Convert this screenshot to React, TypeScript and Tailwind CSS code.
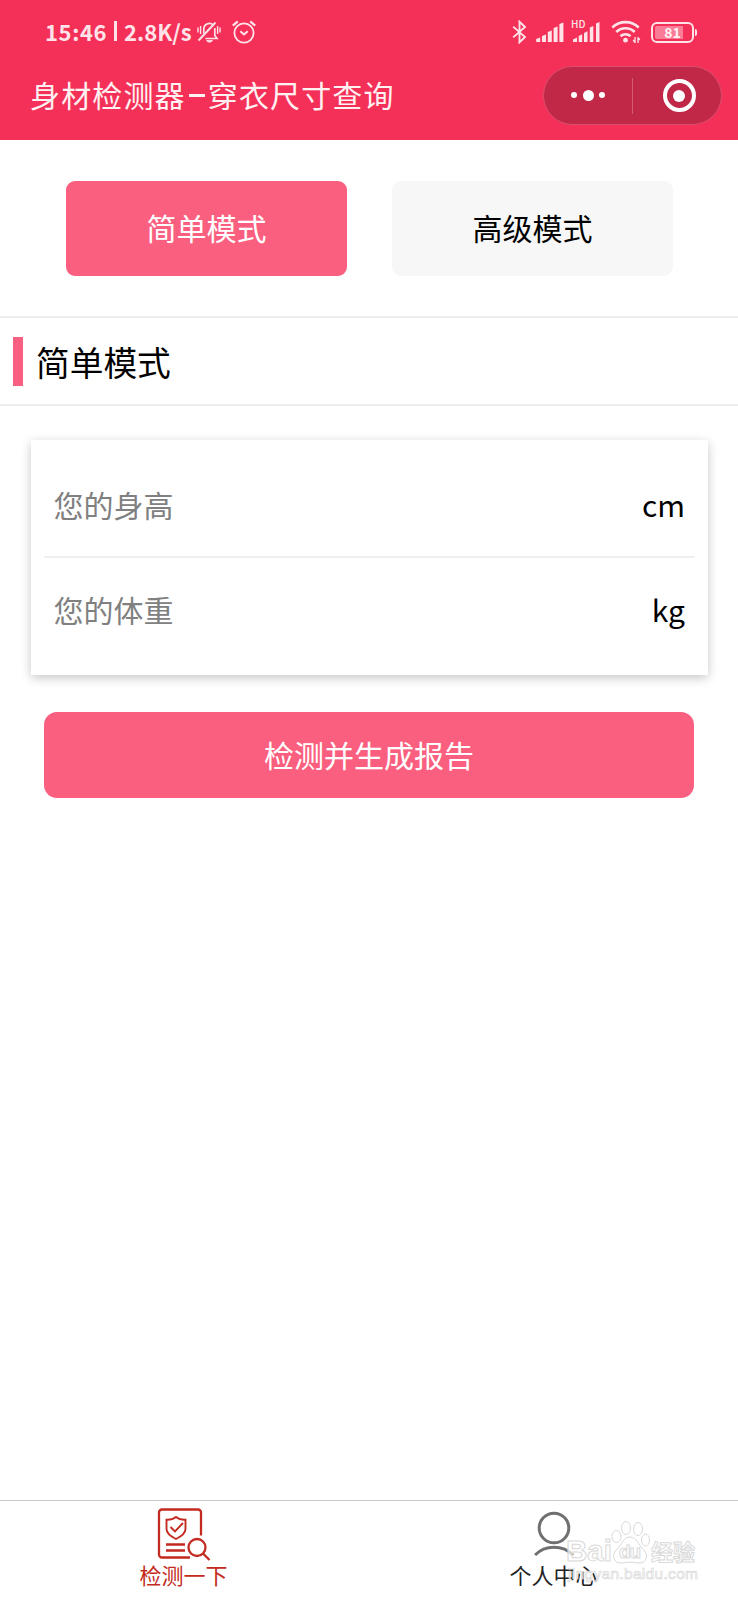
import { useState } from 'react';

const SIGNAL_BARS = [4, 7, 11, 15, 19];

function MutedBell() {
  return (
    <svg className="w-6 h-6" fill="none" viewBox="0 0 24 24" stroke="currentColor" strokeWidth={1.7}>
      <path d="M6.8 13.500V9a5.600 5.600 0 0 1 9.500-4M17.800 8v7.500l2.200 3H8.500" />
      <path d="M1.500 20.500L18.500 2.500" strokeWidth={2} />
      <path d="M1 7.500v5M3.600 6v8M23 7.500v5M20.600 6v8" strokeWidth={1.400} />
      <path d="M9.500 20.500h6c-1 2.200-5 2.200-6 0z" fill="currentColor" strokeWidth={0.800} />
    </svg>
  );
}

function AlarmClock() {
  return (
    <svg className="w-6 h-6" fill="none" viewBox="0 0 24 24" stroke="currentColor" strokeWidth={1.800}>
      <circle cx="12" cy="13" r="9.600" />
      <path d="M8.300 11.200l3.700 3.200 3.700-3.200" strokeWidth={2} />
      <path d="M.800 5.600L5.800 1.300M23.200 5.600L18.200 1.300" strokeWidth={2.200} />
    </svg>
  );
}

function Bluetooth() {
  return (
    <svg className="w-[15px] h-6" fill="none" viewBox="0 0 15 24" stroke="currentColor" strokeWidth={1.900}>
      <path d="M1.200 6.600L13 17l-5.500 5.300V1.700L13 7 1.200 17.400" />
    </svg>
  );
}

function Signal({ hd }: { hd?: boolean }) {
  return (
    <svg className="w-7 h-6" viewBox="0 0 28 24" fill="currentColor">
      {hd ? (
        <path d="M1 22v-2.500l4-2V22zM6.700 22v-6l3.500-1.700V22zM12 22v-9l3.500-1.700V22zM17.800 22V7.500L21.300 6v16zM24 22V3.500L27.500 2v20z" />
      ) : (
        SIGNAL_BARS.map((h, i) => (
          <path key={h} d={`M${i * 5.800 + 0.200} 22v-${h - 1}l4-1.500V22z`} />
        ))
      )}
    </svg>
  );
}

function Wifi() {
  return (
    <svg className="w-[30px] h-6" fill="none" viewBox="0 0 30 24" stroke="currentColor" strokeWidth={2.600}>
      <path d="M1.300 7.500a19 19 0 0 1 26.400 0M5.300 12a13 13 0 0 1 18.400 0M9.500 16.300a7.200 7.200 0 0 1 10 0" />
      <circle cx="14.500" cy="20.200" r="2.400" fill="currentColor" stroke="none" />
      <path d="M24 17v6M27 17v6M22.200 20l1.800 2.500M28.800 20L27 17.500" strokeWidth={1.300} />
    </svg>
  );
}

function StatusBar() {
  return (
    <div className="h-[58px] pt-[6px] flex items-center text-[#ffe3e9]">
      <div className="-mt-[2px] ml-[45px] w-[148px] flex items-center whitespace-nowrap text-[22px] leading-none font-semibold">
        <span className="tracking-[0.6px]">15:46</span>
        <span className="ml-[7px] mr-[7px] w-[3px] h-5 bg-[#ffe3e9]" />
        <span>2.8K/s</span>
      </div>
      <div className="ml-[4px]"><MutedBell /></div>
      <div className="ml-[10.500px]"><AlarmClock /></div>
      <div className="ml-auto mr-[41px] flex items-center">
        <Bluetooth />
        <div className="ml-[9px]"><Signal /></div>
        <div className="ml-[8px] relative">
          <Signal hd />
          <span className="absolute left-[-1px] top-[-1px] text-[10px] leading-none font-medium bg-[#f43058]">HD</span>
        </div>
        <div className="ml-[11px]"><Wifi /></div>
        <div className="ml-[10px] w-[43px] h-[21px] rounded-[6px] border-2 border-[#ffe3e9] p-[2px]">
          <div className="h-full w-full flex items-center justify-center text-[14px] leading-none font-bold text-[#fff3f5] bg-linear-to-r from-[#fa7c97] from-81% to-transparent to-81% rounded-[2px]">
            81
          </div>
        </div>
        <div className="w-[2px] h-[7px] ml-[1px] rounded-r bg-[#ffe3e9]" />
      </div>
    </div>
  );
}

function Capsule() {
  return (
    <div className="w-[179px] h-[59px] -mt-[1px] rounded-full bg-[#c12847] border border-[#d94f6d] flex items-center text-white">
      <div className="w-[88px] -mt-[1px] flex items-center justify-center gap-[5.500px]">
        <span className="w-[6px] h-[6px] rounded-full bg-white" />
        <span className="w-[11px] h-[11px] rounded-full bg-white" />
        <span className="w-[6px] h-[6px] rounded-full bg-white" />
      </div>
      <div className="w-px h-9 bg-[#d55a74]" />
      <div className="flex-1 pl-[4px] flex justify-center">
        <div className="w-[33px] h-[33px] rounded-full border-[4.5px] border-white flex items-center justify-center">
          <span className="w-3 h-3 rounded-full bg-white" />
        </div>
      </div>
    </div>
  );
}

function ReportIcon() {
  return (
    <svg className="w-[54px] h-[54px]" fill="none" viewBox="0 0 54 54" stroke="currentColor" strokeWidth={2.300}>
      <path d="M33 49.500H5a3 3 0 0 1-3-3V4.500a3 3 0 0 1 3-3h36a3 3 0 0 1 3 3v23" />
      <path d="M19 9c2.500 2 5.500 3 9.500 2.800V21c0 4.500-4.500 7.500-9.500 10-5-2.500-9.500-5.500-9.500-10v-9.200c4 .200 7-.800 9.500-2.800z" strokeWidth={1.900} />
      <path d="M13.500 19l4.500 4.500 8-8.500" strokeWidth={1.900} />
      <path d="M9 36.500h19M9 42.500h19" />
      <circle cx="40" cy="39.500" r="8.500" />
      <path d="M46 45.500l6.500 6.500" />
    </svg>
  );
}

function PersonIcon() {
  return (
    <svg className="w-10 h-[46px]" fill="none" viewBox="0 0 40 46" stroke="currentColor" strokeWidth={3}>
      <circle cx="20" cy="17" r="14.800" />
      <path d="M1 44c10-10.500 28-10.500 38 0" />
    </svg>
  );
}

function Watermark() {
  return (
    <svg
      className="absolute left-[562px] top-[18px] w-[150px] h-[66px]"
      viewBox="0 0 150 66"
      fill="#ffffff"
      fillOpacity={0.700}
      stroke="#d9d9d9"
      strokeWidth={1}
    >
      <g fontFamily="Liberation Sans" fontWeight="bold">
        <text x="4" y="42" fontSize="29" textLength="46" lengthAdjust="spacingAndGlyphs">Bai</text>
        <ellipse cx="54.500" cy="17.500" rx="4.500" ry="6" />
        <ellipse cx="64" cy="9" rx="4.500" ry="6.500" />
        <ellipse cx="76" cy="10" rx="4.500" ry="6.500" />
        <ellipse cx="83.500" cy="21" rx="4" ry="6" />
        <path d="M68 18c7 0 8 8 13 12 6 5 4 15-5 14-5-1-11-1-16 0-9 1-11-9-5-14 5-4 6-12 13-12z" />
        <text x="57" y="39" fontSize="19" textLength="22">du</text>
      </g>
      <text x="89" y="41" fontSize="22" fontWeight="bold" fontFamily="Noto Sans CJK SC" textLength="44">经验</text>
      <text x="6" y="60" fontSize="15.500" fontFamily="Liberation Sans" strokeWidth={0.700} textLength="130">jingyan.baidu.com</text>
    </svg>
  );
}

export default function App() {
  const [mode, setMode] = useState<'simple' | 'advanced'>('simple');

  const modeClass = (active: boolean) =>
    active ? 'bg-[#fb5f7f] text-white' : 'bg-[#f7f7f7] text-black';

  return (
    <div className="w-[738px] h-[1600px] flex flex-col overflow-hidden bg-white text-black font-['Noto_Sans_CJK_SC',sans-serif]">
      {/* Header */}
      <header className="flex-none h-[139.500px] bg-[#f43058]">
        <StatusBar />
        <div className="h-[76px] pl-[30px] pr-[16px] flex items-center justify-between">
          <h1 className="-mt-[4px] flex items-center text-[30px] leading-none tracking-[1.150px] text-[#fff0f2]">
            身材检测器
            <span className="mt-[2px] mx-[3px] w-[16px] h-[3px] bg-[#fff0f2]" />
            穿衣尺寸查询
          </h1>
          <Capsule />
        </div>
      </header>

      {/* Mode switch */}
      <div className="flex-none h-[178.500px] border-b-2 border-[#ededed] pt-[41px] pl-[66px] pr-[65px] flex justify-between">
        <button
          onClick={() => setMode('simple')}
          className={`w-[281px] h-[95px] pb-[2px] rounded-[9px] text-[30px] leading-none ${modeClass(mode === 'simple')}`}
        >
          简单模式
        </button>
        <button
          onClick={() => setMode('advanced')}
          className={`w-[281px] h-[95px] pb-[2px] rounded-[9px] text-[30px] leading-none ${modeClass(mode === 'advanced')}`}
        >
          高级模式
        </button>
      </div>

      <div className="flex-none h-[88px] border-b-2 border-[#ededed] pl-[13px] flex items-center">
        <div className="w-[9.500px] h-[49px] bg-[#f85f80]" />
        <h2 className="mt-[2px] ml-[13.500px] text-[33.700px] leading-none">{mode === 'simple' ? '简单模式' : '高级模式'}</h2>
      </div>

      {/* Measurements */}
      <div className="flex-none mt-[34px] ml-[31px] mr-[30px] h-[235px] px-[13px] shadow-[0_3px_10px_rgba(0,0,0,0.22)]">
        <label className="h-[118px] pt-[12px] pl-[9.500px] pr-[10px] flex items-center justify-between text-[30px] border-b-2 border-[#efefef]">
          <input placeholder="您的身高" className="w-[400px] outline-none placeholder-[#808080]" />
          cm
        </label>
        <label className="h-[103px] pl-[9.500px] pr-[10px] flex items-center justify-between text-[30px]">
          <input placeholder="您的体重" className="w-[400px] outline-none placeholder-[#808080]" />
          kg
        </label>
      </div>

      <button className="flex-none mt-[37px] mx-[44px] h-[86px] pb-[2px] rounded-[13px] bg-[#fb5f7f] text-white text-[30px] leading-none">
        检测并生成报告
      </button>

      {/* Tab bar */}
      <nav className="relative mt-auto flex-none h-[100px] border-t border-[#c8c8c8] grid grid-cols-2 text-[22px] leading-none">
        <a className="flex flex-col items-center pt-[7px] pr-[2px] text-[#c32a20]">
          <ReportIcon />
          <span className="mt-[1px]">检测一下</span>
        </a>
        <a className="flex flex-col items-center pt-[10px] text-[#222]">
          <span className="text-[#707070]"><PersonIcon /></span>
          <span className="mt-[6px]">个人中心</span>
        </a>
        <Watermark />
      </nav>
    </div>
  );
}
